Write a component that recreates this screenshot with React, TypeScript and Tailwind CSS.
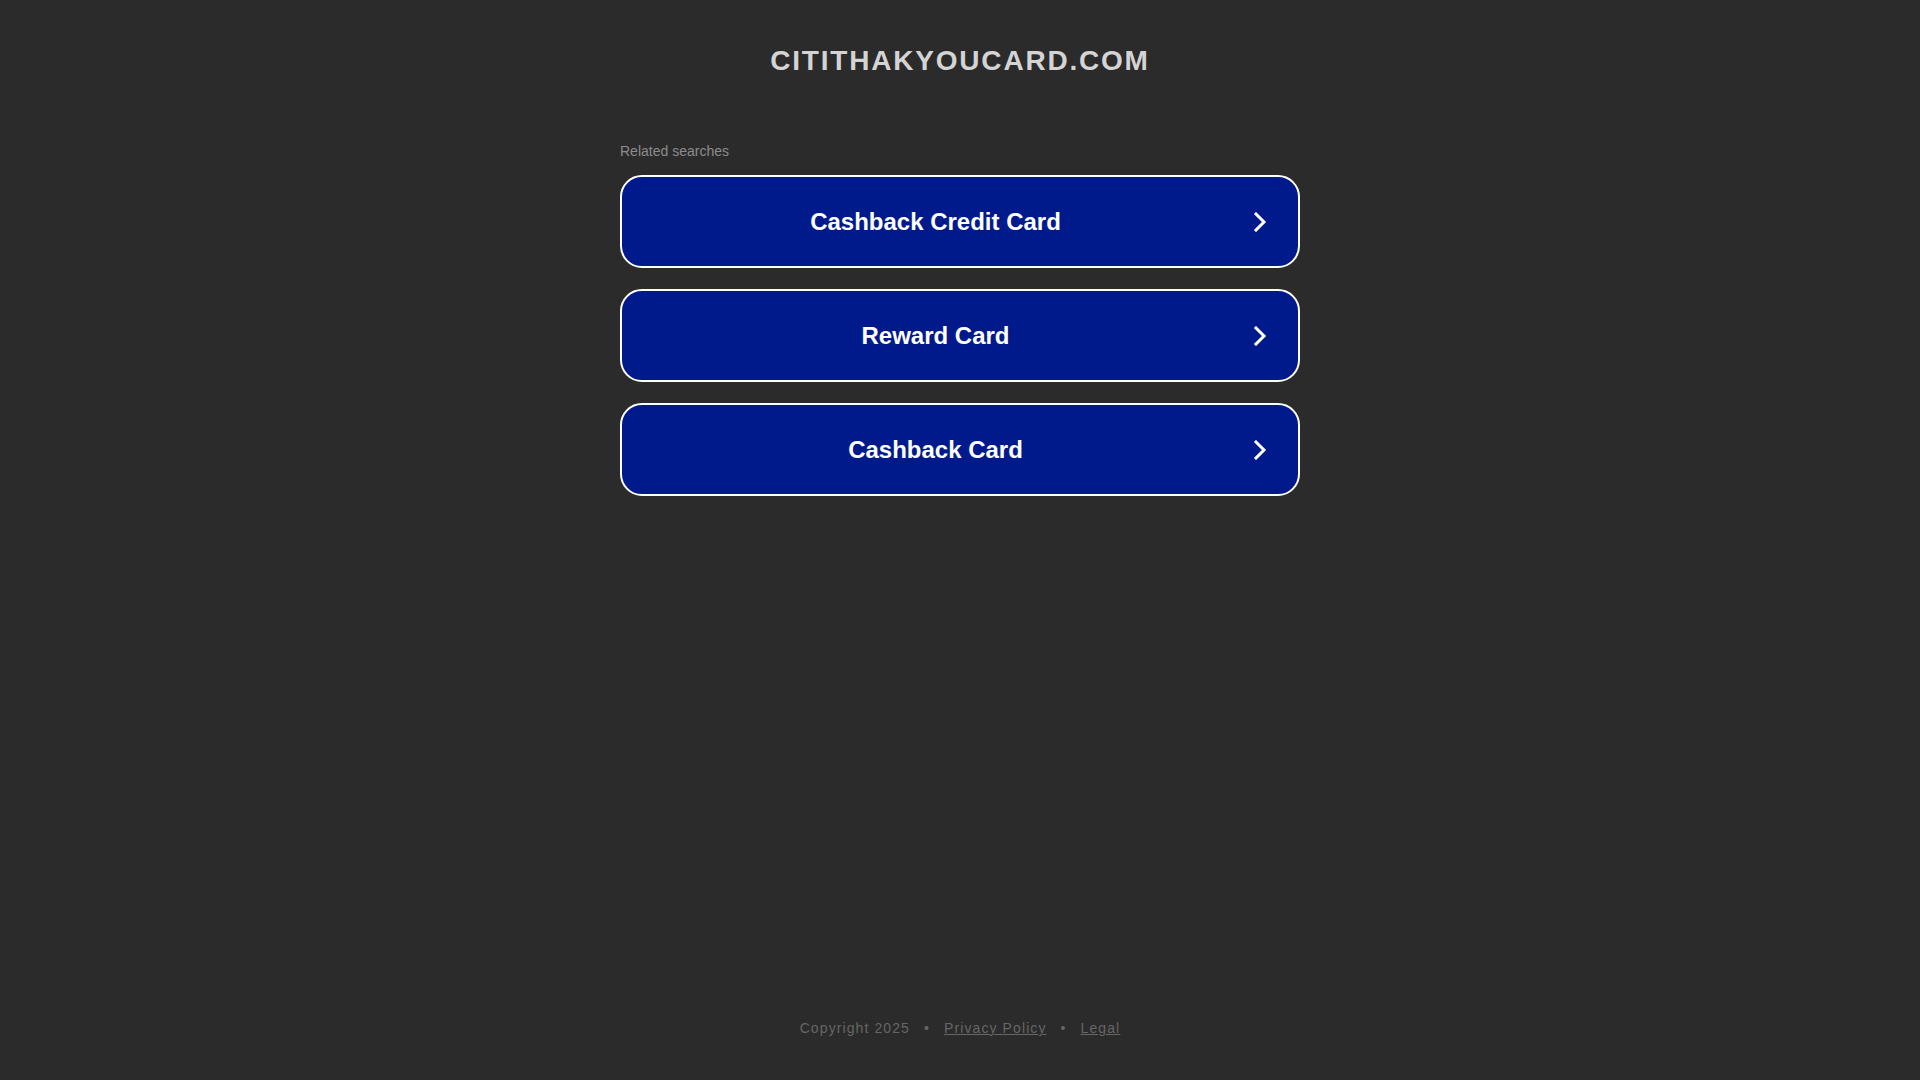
const SEARCHES = ["Cashback Credit Card", "Reward Card", "Cashback Card"];

const Chevron = () => (
  <svg width="14" height="20" viewBox="0 0 14 20" fill="none">
    <path d="M3 2 L11 10 L3 18" stroke="#ffffff" strokeWidth="3" strokeLinecap="square" strokeLinejoin="miter" />
  </svg>
);

export default function App() {
  return (
    <div
      className="flex min-h-screen flex-col bg-[#2b2b2b]"
      style={{ fontFamily: '"Liberation Sans", Arial, sans-serif' }}
    >
      <main className="flex flex-1 flex-col items-center">
        <h1 className="mt-[44px] text-[28px] font-bold leading-[34px] tracking-[1.8px] text-[#d4d4d4]">
          CITITHAKYOUCARD.COM
        </h1>

        <section className="mt-[65px] w-[680px]">
          <div className="mb-[16px] text-[14px] leading-[16px] text-[#8c8c8c]">Related searches</div>
          <div className="flex flex-col gap-[21px]">
            {SEARCHES.map((label) => (
              <a
                key={label}
                href="#"
                className="flex h-[93px] items-center rounded-[22px] border-2 border-white bg-[#011a8b] pl-[16px] pr-[12px]"
              >
                <span className="flex-1 text-center text-[24px] font-bold text-white">{label}</span>
                <span className="flex w-[53px] items-center justify-center">
                  <Chevron />
                </span>
              </a>
            ))}
          </div>
        </section>
      </main>

      <footer className="mb-[43px] flex items-center justify-center gap-[14px] text-[14px] leading-[18px] tracking-[1.1px] text-[#666666]">
        <span>Copyright 2025</span>
        <span>•</span>
        <a href="#" className="underline">Privacy Policy</a>
        <span>•</span>
        <a href="#" className="underline">Legal</a>
      </footer>
    </div>
  );
}
